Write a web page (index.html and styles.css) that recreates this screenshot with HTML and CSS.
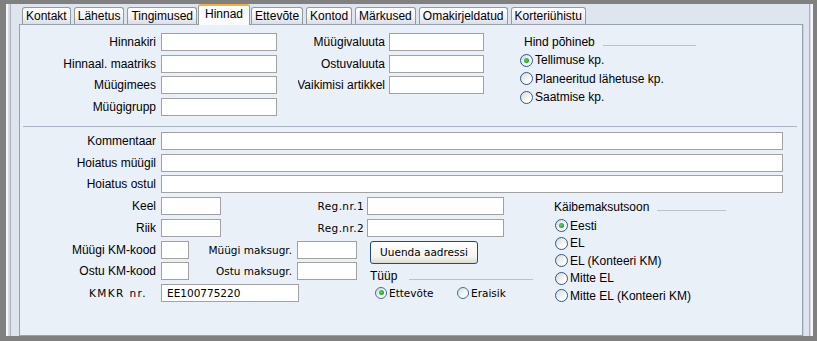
FILE: index.html
```html
<!DOCTYPE html>
<html lang="et">

<head>
    <meta charset="UTF-8">
    <title>Hinnad</title>
    <link rel="stylesheet" href="styles.css">
</head>

<body>
    <div class="window">
        <div class="frame">
            <ul class="tabs">
                <li>Kontakt</li>
                <li>Lähetus</li>
                <li>Tingimused</li>
                <li class="active">Hinnad</li>
                <li>Ettevõte</li>
                <li>Kontod</li>
                <li>Märkused</li>
                <li>Omakirjeldatud</li>
                <li>Korteriühistu</li>
            </ul>

            <div class="panel">
                <!-- hinnad -->
                <div class="top">
                    <div class="rows">
                        <div class="row"><span class="lbl lbl-main">Hinnakiri</span><input class="in w116"></div>
                        <div class="row"><span class="lbl lbl-main">Hinnaal. maatriks</span><input class="in w116"></div>
                        <div class="row"><span class="lbl lbl-main">Müügimees</span><input class="in w116"></div>
                        <div class="row"><span class="lbl lbl-main">Müügigrupp</span><input class="in w116"></div>
                    </div>
                    <div class="rows col2">
                        <div class="row"><span class="lbl lbl-mid">Müügivaluuta</span><input class="in w95"></div>
                        <div class="row"><span class="lbl lbl-mid">Ostuvaluuta</span><input class="in w95"></div>
                        <div class="row"><span class="lbl lbl-mid">Vaikimisi artikkel</span><input class="in w95"></div>
                    </div>
                    <div class="group hind">
                        <div class="group-title"><span>Hind põhineb</span><span class="line"></span></div>
                        <div class="radio checked"><span class="dot"></span>Tellimuse kp.</div>
                        <div class="radio"><span class="dot"></span>Planeeritud lähetuse kp.</div>
                        <div class="radio"><span class="dot"></span>Saatmise kp.</div>
                    </div>
                </div>

                <div class="sep"></div>

                <!-- kommentaarid ja aadress -->
                <div class="bottom rows">
                    <div class="row"><span class="lbl lbl-main">Kommentaar</span><input class="in wide"></div>
                    <div class="row"><span class="lbl lbl-main">Hoiatus müügil</span><input class="in wide"></div>
                    <div class="row"><span class="lbl lbl-main">Hoiatus ostul</span><input class="in wide"></div>

                    <div class="lower">
                        <div class="rows lower-left">
                            <div class="row">
                                <span class="lbl lbl-main">Keel</span><input class="in w60">
                                <span class="lbl lbl-reg alt">Reg.nr.1</span><input class="in w137">
                            </div>
                            <div class="row">
                                <span class="lbl lbl-main">Riik</span><input class="in w60">
                                <span class="lbl lbl-reg alt">Reg.nr.2</span><input class="in w137">
                            </div>
                            <div class="row">
                                <span class="lbl lbl-main">Müügi KM-kood</span><input class="in w28">
                                <span class="lbl lbl-tax alt">Müügi maksugr.</span><input class="in w60">
                                <button class="btn alt">Uuenda aadressi</button>
                            </div>
                            <div class="row">
                                <span class="lbl lbl-main">Ostu KM-kood</span><input class="in w28">
                                <span class="lbl lbl-tax alt">Ostu maksugr.</span><input class="in w60">
                                <div class="group-title tyyp"><span>Tüüp</span><span class="line"></span></div>
                            </div>
                            <div class="row">
                                <span class="lbl lbl-main lbl-kmkr alt">KMKR nr.</span><input class="in w138 alt" value="EE100775220">
                                <div class="radio small checked r-firma"><span class="dot"></span>Ettevõte</div>
                                <div class="radio small"><span class="dot"></span>Eraisik</div>
                            </div>
                        </div>

                        <div class="group kaibe">
                            <div class="group-title"><span>Käibemaksutsoon</span><span class="line"></span></div>
                            <div class="radio checked"><span class="dot"></span>Eesti</div>
                            <div class="radio"><span class="dot"></span>EL</div>
                            <div class="radio"><span class="dot"></span>EL (Konteeri KM)</div>
                            <div class="radio"><span class="dot"></span>Mitte EL</div>
                            <div class="radio"><span class="dot"></span>Mitte EL (Konteeri KM)</div>
                        </div>
                    </div>
                </div>
            </div>
        </div>
    </div>
</body>

</html>
```

FILE: styles.css
```css
* {
    margin: 0;
    padding: 0;
    box-sizing: border-box;
}

body {
    width: 817px;
    height: 341px;
    overflow: hidden;
    background: #808080;
    font-family: "Liberation Sans", Arial, sans-serif;
    font-size: 12px;
    color: #000;
}

.window {
    height: 341px;
    padding: 4px 4px 5px 6px;
}

/* raam koos vasaku ja parema triibuga */
.frame {
    height: 332px;
    padding: 0 10px 0 13px;
    background:
        linear-gradient(to right, #f7f7f9 0 2px, #d8dbe6 2px 4px, #a9b1bd 4px 5px, transparent 5px),
        linear-gradient(to left, #f7f7f9 0 2px, #d8dbe6 2px 3px, #a9b1bd 3px 4px, transparent 4px),
        #dfe5ee;
}

.tabs {
    display: flex;
    align-items: flex-end;
    height: 20px;
    padding-left: 3px;
    list-style: none;
    position: relative;
    z-index: 1;
}

.tabs li {
    height: 17px;
    line-height: 16px;
    padding: 0 3px;
    margin-right: 3px;
    border: 1px solid #919b9c;
    border-bottom: 0;
    border-radius: 3px 3px 0 0;
    background: linear-gradient(#ffffff, #f3f3f6 55%, #dcdde7);
    white-space: nowrap;
}

.tabs li.active {
    height: 21px;
    line-height: 17px;
    margin: 0 1px -1px -2px;
    padding: 0 6px;
    border-top: 2px solid #f2b13c;
    background: #f9fbfd;
}

.panel {
    height: 312px;
    border: 1px solid #98a3b0;
    box-shadow: 1px 0 0 #c9d0da;
    background: #eaf0f8;
}

.top {
    display: flex;
    align-items: flex-start;
    padding: 8px 0 10px;
}

.rows {
    display: flex;
    flex-direction: column;
    gap: 3.7px;
}

.row {
    display: flex;
    align-items: center;
    height: 18px;
}

.lbl {
    display: flex;
    justify-content: flex-end;
    align-items: center;
    flex: none;
    height: 18px;
    overflow: hidden;
    white-space: nowrap;
}

.alt {
    font-family: "DejaVu Sans", Verdana, sans-serif;
    font-size: 10.5px;
}

.lbl-main {
    width: 136px;
    margin-right: 5px;
}

.lbl-kmkr {
    padding-right: 9px;
    letter-spacing: 1.4px;
}

.col2 {
    margin-left: 21px;
}

.lbl-mid {
    width: 87px;
    margin-right: 4px;
}

.lbl-reg {
    width: 143px;
    margin-right: 3px;
    letter-spacing: 0.4px;
}

.lbl-tax {
    width: 103px;
    margin-right: 5px;
}

.in {
    flex: none;
    height: 18px;
    padding: 0 5px;
    border: 1px solid #a2a2a2;
    background: #fff;
    font: inherit;
    outline: none;
}

.in.alt {
    font-family: "DejaVu Sans", Verdana, sans-serif;
    font-size: 10.5px;
}

.w116 { width: 116px; }
.w95 { width: 95px; }
.w60 { width: 60px; }
.w28 { width: 28px; }
.w137 { width: 137px; }
.w138 { width: 138px; }

.wide {
    width: 622px;
}

.sep {
    height: 1px;
    margin: 0 5px 0 3px;
    background: #aab5c4;
}

.bottom {
    padding-top: 5px;
}

.lower {
    display: flex;
    align-items: flex-start;
}

.lower-left {
    width: 534px;
}

/* grupid */
.group-title {
    display: flex;
    align-items: center;
    height: 18px;
    white-space: nowrap;
}

.line {
    flex: 1;
    height: 1px;
    margin: 6px 0 0 8px;
    background: #bcc2ca;
}

.hind {
    width: 176px;
    margin-left: 36px;
}

.hind .group-title {
    padding-left: 4px;
}

.hind .radio {
    height: 18.5px;
}

.kaibe {
    width: 172px;
}

.kaibe .group-title {
    height: 20px;
}

.kaibe .radio {
    height: 17.5px;
    padding-left: 1px;
}

.tyyp {
    align-self: flex-start;
    width: 163px;
    height: 18px;
    margin: 5px 0 0 13px;
}

.tyyp .line {
    margin-left: 12px;
}

.radio {
    display: flex;
    align-items: center;
    gap: 2px;
    white-space: nowrap;
}

.dot {
    width: 13px;
    height: 13px;
    border: 1px solid #2a5b88;
    border-radius: 50%;
    background: linear-gradient(135deg, #d9d9d2, #ffffff 75%);
    position: relative;
}

.checked .dot::after {
    content: '';
    position: absolute;
    top: 3px;
    left: 3px;
    width: 5px;
    height: 5px;
    border-radius: 50%;
    background: radial-gradient(circle at 40% 40%, #5fd35f, #21a121 70%);
}

.radio.small {
    font-family: "DejaVu Sans", Verdana, sans-serif;
    font-size: 10.5px;
}

.radio.small .dot {
    width: 12px;
    height: 12px;
    border-color: #3b6fa0;
}

.radio.small.checked .dot::after {
    top: 2.5px;
    left: 2.5px;
}

.r-firma {
    width: 82px;
    margin-left: 76px;
}

.btn {
    align-self: flex-start;
    width: 108px;
    height: 23px;
    margin-left: 13px;
    border: 1px solid #1f4c7a;
    border-radius: 3px;
    background: linear-gradient(#ffffff, #f4f4f0 70%, #dedbd2);
    color: #000;
}
```
